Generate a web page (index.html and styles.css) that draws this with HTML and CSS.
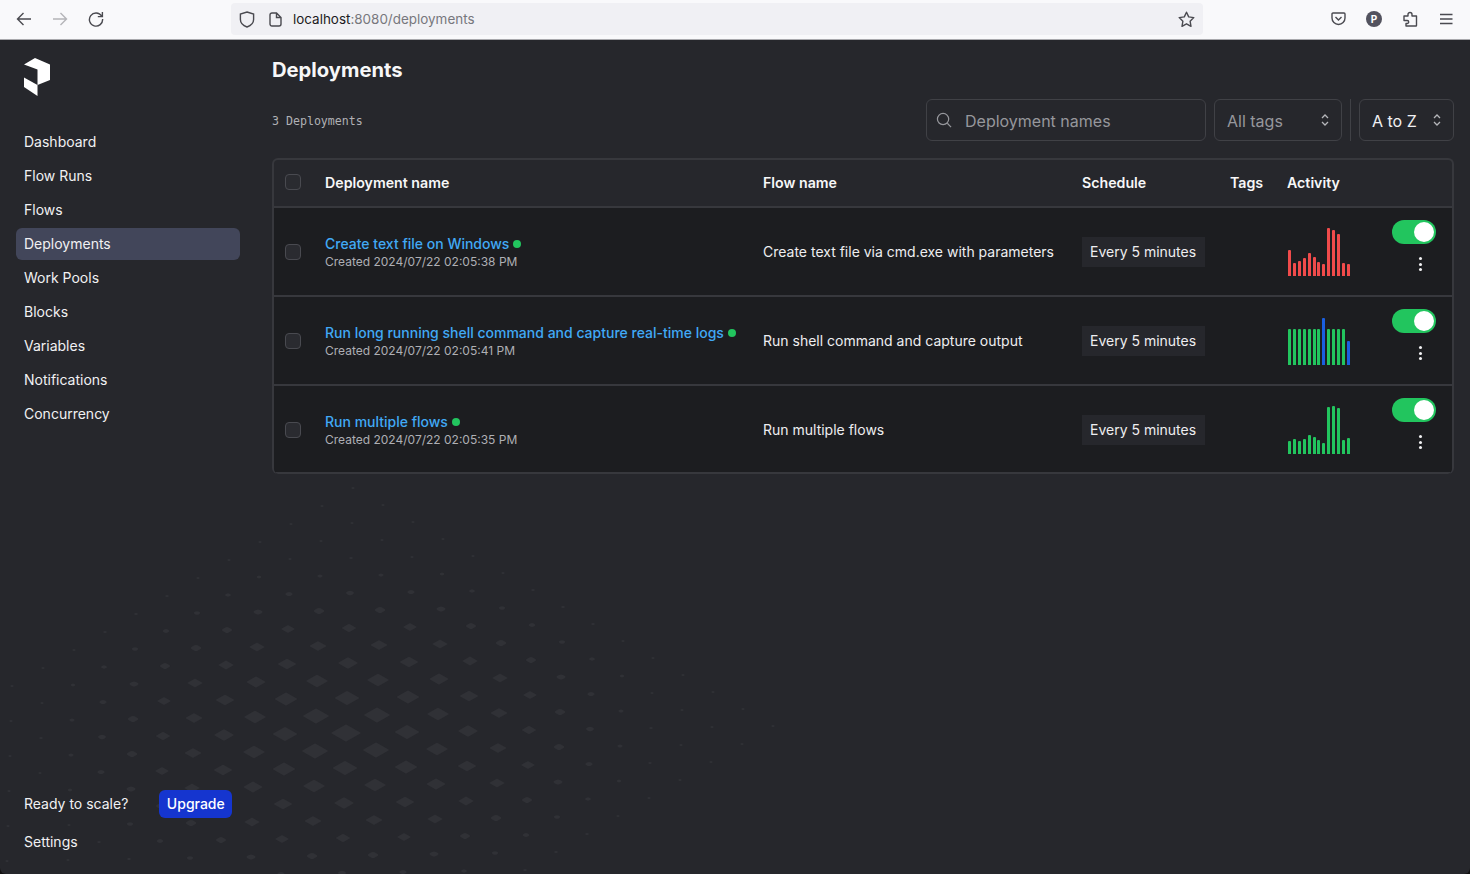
FILE: index.html
```html
<!DOCTYPE html>
<html lang="en">
<head>
    <meta charset="UTF-8">
    <meta name="viewport" content="width=device-width, initial-scale=1.0">
    <title>Deployments</title>
    <link rel="stylesheet" href="styles.css">
</head>
<body>
    <div class="toolbar">
        <div class="tool-group">
            <span class="tool"><svg width="16" height="16" viewBox="0 0 16 16" fill="none" stroke="#4a4a50" stroke-width="1.4"><path d="M15 8H1.5M7.5 2L1.5 8l6 6"/></svg></span>
            <span class="tool"><svg width="16" height="16" viewBox="0 0 16 16" fill="none" stroke="#b4b4b8" stroke-width="1.4"><path d="M1 8h13.5M8.5 2l6 6-6 6"/></svg></span>
            <span class="tool"><svg width="16" height="16" viewBox="0 0 16 16" fill="none" stroke="#4a4a50" stroke-width="1.4"><path d="M13.6 5A6.6 6.6 0 1 0 14.6 8M14.4 1v4.6H9.8"/></svg></span>
        </div>
        <div class="url-bar">
            <svg width="16" height="17" viewBox="0 0 16 17" fill="none" stroke="#4a4a50" stroke-width="1.4"><path d="M8 1l6.6 2v5.4c0 3.6-3 6.2-6.6 7.6-3.6-1.4-6.6-4-6.6-7.6V3z"/></svg>
            <svg class="page-icon" width="13" height="15" viewBox="0 0 13 15" fill="none" stroke="#4a4a50" stroke-width="1.4"><path d="M1 3a2 2 0 0 1 2-2h4.5L12 5.5V12a2 2 0 0 1-2 2H3a2 2 0 0 1-2-2zM7.5 1v4.5H12"/></svg>
            <span class="url-text">localhost<span class="url-dim">:8080/deployments</span></span>
            <svg class="star" width="17" height="17" viewBox="0 0 17 17" fill="none" stroke="#4a4a50" stroke-width="1.4" stroke-linejoin="round"><path d="M8.5 1.2l2.2 4.7 5.1.7-3.7 3.6.9 5.1-4.5-2.5L4 15.3l.9-5.1L1.200 6.600l5.100-.7z"/></svg>
        </div>
        <div class="tool-group right">
            <span class="tool"><svg width="15" height="14" viewBox="0 0 15 14" fill="none" stroke="#4a4a50" stroke-width="1.4"><path d="M2 1h11a1 1 0 0 1 1 1v4a6.500 6.500 0 0 1-13 0V2a1 1 0 0 1 1-1zM4.500 5l3 3 3-3"/></svg></span>
            <span class="tool"><span class="avatar">P</span></span>
            <span class="tool"><svg width="15" height="16" viewBox="0 0 15 16" fill="none" stroke="#4a4a50" stroke-width="1.4" stroke-linejoin="round"><path d="M1 5h4V3.500a2 2 0 0 1 4 0V5h4.500v9.500a.5.5 0 0 1-.5.5H3V12.500h1.200a1.500 1.500 0 0 0 0-3H1z"/></svg></span>
            <span class="tool"><svg width="14" height="12" viewBox="0 0 14 12" fill="none" stroke="#4a4a50" stroke-width="1.4"><path d="M1 1.500h12.500M1 6h12.500M1 10.500h12.500"/></svg></span>
        </div>
    </div>

    <div class="shell">
        <svg id="backdrop" class="backdrop" width="1470" height="834"></svg>

        <aside class="sidebar">
            <svg class="logo" width="26" height="38" viewBox="0 0 26 38" fill="#fff"><path d="M0 6.500L11 0l15 6.500v15.500l-12.500 5V11.500z"/><path d="M0 19.500l13.500 7.500v11L0 29z"/></svg>
            <nav class="nav">
                <a class="nav-item">Dashboard</a>
                <a class="nav-item">Flow Runs</a>
                <a class="nav-item">Flows</a>
                <a class="nav-item active">Deployments</a>
                <a class="nav-item">Work Pools</a>
                <a class="nav-item">Blocks</a>
                <a class="nav-item">Variables</a>
                <a class="nav-item">Notifications</a>
                <a class="nav-item">Concurrency</a>
            </nav>
            <div class="sidebar-bottom">
                <div class="upgrade-row">
                    <span class="upgrade-label">Ready to scale?</span>
                    <button class="upgrade" type="button">Upgrade</button>
                </div>
                <a class="nav-item">Settings</a>
            </div>
        </aside>

        <main class="main">
            <h1 class="title">Deployments</h1>
            <div class="filters">
                <span class="count">3 Deployments</span>
                <div class="control search">
                    <svg width="16" height="16" viewBox="0 0 17 17" fill="none" stroke="#96979c" stroke-width="1.3"><circle cx="7.500" cy="7.500" r="6"/><path d="M12 12l4 4"/></svg>
                    <span>Deployment names</span>
                </div>
                <div class="control tags">
                    <span>All tags</span>
                    <svg class="updown" width="8" height="12" viewBox="0 0 8 12" fill="none" stroke="#b5b6ba" stroke-width="1.300"><path d="M1 4l3-3 3 3M1 8l3 3 3-3"/></svg>
                </div>
                <span class="divider"></span>
                <div class="control sort">
                    <span>A to Z</span>
                    <svg class="updown" width="8" height="12" viewBox="0 0 8 12" fill="none" stroke="#b5b6ba" stroke-width="1.300"><path d="M1 4l3-3 3 3M1 8l3 3 3-3"/></svg>
                </div>
            </div>

            <div class="table-wrap">
                <table class="table">
                    <colgroup>
                        <col class="col-check"><col class="col-name"><col class="col-flow"><col class="col-schedule"><col class="col-tags"><col class="col-activity"><col>
                    </colgroup>
                    <thead>
                        <tr>
                            <th><span class="checkbox"></span></th>
                            <th>Deployment name</th>
                            <th>Flow name</th>
                            <th>Schedule</th>
                            <th>Tags</th>
                            <th>Activity</th>
                            <th></th>
                        </tr>
                    </thead>
                    <tbody>
                        <tr>
                            <td><span class="checkbox"></span></td>
                            <td>
                                <div class="name-line"><a class="name-link">Create text file on Windows</a><span class="status-dot"></span></div>
                                <div class="created">Created 2024/07/22 02:05:38 PM</div>
                            </td>
                            <td>Create text file via cmd.exe with parameters</td>
                            <td><span class="chip">Every 5 minutes</span></td>
                            <td></td>
                            <td>
                                <div class="bars red">
                                    <i style="height:26px"></i><i style="height:13px"></i><i style="height:15px"></i><i style="height:18px"></i><i style="height:23px"></i><i style="height:19px"></i><i style="height:14px"></i><i style="height:12px"></i><i style="height:48px"></i><i style="height:46px"></i><i style="height:42px"></i><i style="height:13px"></i><i style="height:12px"></i>
                                </div>
                            </td>
                            <td class="actions">
                                <span class="toggle"></span>
                                <span class="more"><b></b><b></b><b></b></span>
                            </td>
                        </tr>
                        <tr>
                            <td><span class="checkbox"></span></td>
                            <td>
                                <div class="name-line"><a class="name-link">Run long running shell command and capture real-time logs</a><span class="status-dot"></span></div>
                                <div class="created">Created 2024/07/22 02:05:41 PM</div>
                            </td>
                            <td>Run shell command and capture output</td>
                            <td><span class="chip">Every 5 minutes</span></td>
                            <td></td>
                            <td>
                                <div class="bars green">
                                    <i style="height:36px"></i><i style="height:36px"></i><i style="height:36px"></i><i style="height:36px"></i><i style="height:36px"></i><i style="height:36px"></i><i style="height:36px"></i><i class="blue" style="height:47px"></i><i style="height:36px"></i><i style="height:36px"></i><i style="height:36px"></i><i style="height:36px"></i><i class="blue" style="height:24px"></i>
                                </div>
                            </td>
                            <td class="actions">
                                <span class="toggle"></span>
                                <span class="more"><b></b><b></b><b></b></span>
                            </td>
                        </tr>
                        <tr>
                            <td><span class="checkbox"></span></td>
                            <td>
                                <div class="name-line"><a class="name-link">Run multiple flows</a><span class="status-dot"></span></div>
                                <div class="created">Created 2024/07/22 02:05:35 PM</div>
                            </td>
                            <td>Run multiple flows</td>
                            <td><span class="chip">Every 5 minutes</span></td>
                            <td></td>
                            <td>
                                <div class="bars green">
                                    <i style="height:13px"></i><i style="height:15px"></i><i style="height:13px"></i><i style="height:15px"></i><i style="height:19px"></i><i style="height:17px"></i><i style="height:14px"></i><i style="height:11px"></i><i style="height:47px"></i><i style="height:48px"></i><i style="height:46px"></i><i style="height:14px"></i><i style="height:16px"></i>
                                </div>
                            </td>
                            <td class="actions">
                                <span class="toggle"></span>
                                <span class="more"><b></b><b></b><b></b></span>
                            </td>
                        </tr>
                    </tbody>
                </table>
            </div>
        </main>
    </div>

    <script src="script.js"></script>
</body>
</html>
```

FILE: styles.css
```css
* {
    box-sizing: border-box;
}
html, body {
    height: 100%;
}
body {
    margin: 0;
    display: flex;
    flex-direction: column;
    overflow: hidden;
    font-family: Inter, "Noto Sans", sans-serif;
    font-size: 14px;
    color: #eeeef0;
    background-color: #111;
}
.toolbar {
    flex: none;
    height: 40px;
    padding: 0 6px 1px;
    display: flex;
    align-items: center;
    background-color: #f9f9fb;
    border-bottom: 1px solid #a9a9ad;
}
.tool-group {
    display: flex;
}
.tool-group.right {
    margin-left: auto;
}
.tool {
    width: 36px;
    height: 32px;
    display: flex;
    align-items: center;
    justify-content: center;
}
.url-bar {
    width: 972px;
    height: 32px;
    margin-left: 117px;
    padding: 0 8px;
    display: flex;
    align-items: center;
    background-color: #f0f0f4;
    border-radius: 4px;
}
.page-icon {
    margin-left: 14px;
}
.url-text {
    margin-left: 11px;
    font-size: 13.44px;
    color: #1c1b22;
}
.url-dim {
    color: #77777d;
}
.star {
    margin-left: auto;
}
.avatar {
    width: 16px;
    height: 16px;
    border-radius: 50%;
    background-color: #52525e;
    color: #fff;
    font-size: 10px;
    font-weight: 700;
    line-height: 16px;
    text-align: center;
}
.shell {
    flex: 1;
    position: relative;
    display: flex;
    min-height: 0;
    background-color: #26272c;
    border-radius: 0 0 6px 6px;
    overflow: hidden;
}
.backdrop {
    position: absolute;
    left: 0;
    top: 0;
}
.sidebar {
    position: relative;
    flex: none;
    width: 256px;
    padding: 18px 16px 16px;
    display: flex;
    flex-direction: column;
}
.logo {
    margin-left: 8px;
}
.nav {
    margin-top: 30px;
    display: flex;
    flex-direction: column;
    gap: 2px;
}
.nav-item {
    height: 32px;
    padding: 0 8px 2px;
    display: flex;
    align-items: center;
    border-radius: 6px;
    color: #f1f1f3;
}
.nav-item.active {
    background-color: #42465a;
}
.sidebar-bottom {
    margin-top: auto;
    display: flex;
    flex-direction: column;
    gap: 8px;
}
.upgrade-row {
    padding-left: 8px;
    display: flex;
    align-items: center;
    gap: 31px;
    color: #f1f1f3;
}
.upgrade-label {
    padding-bottom: 2px;
}
.upgrade {
    width: 73px;
    height: 28px;
    padding: 0 0 2px;
    border: none;
    border-radius: 6px;
    background-color: #1535cf;
    color: #fff;
    font-family: inherit;
    font-size: 14px;
    font-weight: 500;
}
.main {
    position: relative;
    flex: 1;
    min-width: 0;
    padding: 16px 16px 0;
}
.title {
    margin: 0;
    font-size: 20.2px;
    font-weight: 700;
    line-height: 28px;
    color: #f7f7f8;
}
.filters {
    margin-top: 15px;
    display: flex;
    align-items: center;
    gap: 8px;
}
.count {
    margin-right: auto;
    padding-top: 2px;
    font-family: "DejaVu Sans Mono", monospace;
    font-size: 11.6px;
    color: #b0b1b5;
}
.control {
    height: 42px;
    padding: 0 12px;
    display: flex;
    align-items: center;
    border: 1px solid #404146;
    border-radius: 6px;
    font-size: 16px;
    color: #96979c;
}
.control span {
    padding-top: 2px;
}
.search {
    width: 280px;
    gap: 13px;
    padding-left: 9px;
}
.tags {
    width: 128px;
    justify-content: space-between;
}
.sort {
    width: 95px;
    justify-content: space-between;
    color: #f0f0f2;
}
.divider {
    width: 1px;
    height: 42px;
    background-color: #404146;
}
.table-wrap {
    margin-top: 17px;
    border: 2px solid #37383d;
    border-bottom: none;
    border-radius: 6px;
    overflow: hidden;
}
.table {
    width: 100%;
    table-layout: fixed;
    border-collapse: separate;
    border-spacing: 0;
}
.col-check {
    width: 51px;
}
.col-name {
    width: 438px;
}
.col-flow {
    width: 319px;
}
.col-schedule {
    width: 148px;
}
.col-tags {
    width: 57px;
}
.col-activity {
    width: 105px;
}
th {
    height: 48px;
    padding: 0 0 2px;
    text-align: left;
    font-size: 14.2px;
    font-weight: 600;
    color: #f7f7f8;
    border-bottom: 2px solid #37383d;
}
td {
    height: 89px;
    padding: 0;
    background-color: #1c1d20;
    border-bottom: 2px solid #37383d;
}
tr:last-child td {
    height: 88px;
}
tr:last-child td:not(.actions) {
    padding-top: 1px;
}
th:first-child, td:first-child {
    padding-left: 11px;
}
.checkbox {
    display: block;
    width: 16px;
    height: 16px;
    border: 1px solid #494a50;
    border-radius: 4px;
    background-color: #2a2b30;
}
.name-line {
    display: flex;
    align-items: center;
    gap: 4px;
    height: 18px;
}
.name-link {
    color: #41a9f5;
    font-weight: 500;
    white-space: nowrap;
}
.status-dot {
    width: 8px;
    height: 8px;
    border-radius: 50%;
    background-color: #22c55e;
}
.created {
    margin-top: 1px;
    font-size: 12px;
    color: #aeafb4;
}
.chip {
    display: inline-block;
    padding: 0 9px 0 8px;
    height: 30px;
    line-height: 30px;
    background-color: #26272c;
    white-space: nowrap;
}
.bars {
    width: 62px;
    height: 48px;
    margin-left: 1px;
    display: flex;
    align-items: flex-end;
    justify-content: space-between;
}
.bars i {
    width: 3px;
    border-radius: 1px 1px 0 0;
}
.bars.red i {
    background-color: #f04b4b;
}
.bars.green i {
    background-color: #22c55e;
}
.bars.green i.blue {
    background-color: #1a5fe0;
}
td.actions {
    vertical-align: top;
    padding: 12px 16px 0 0;
}
.toggle {
    position: relative;
    display: block;
    margin-left: auto;
    width: 44px;
    height: 24px;
    border-radius: 12px;
    background-color: #22c55e;
}
.toggle::after {
    content: "";
    position: absolute;
    right: 2px;
    top: 2px;
    width: 20px;
    height: 20px;
    border-radius: 50%;
    background-color: #fff;
}
.more {
    margin: 13px 8px 0 auto;
    width: 16px;
    height: 14px;
    display: flex;
    flex-direction: column;
    align-items: center;
    justify-content: space-between;
}
.more b {
    width: 3px;
    height: 3px;
    border-radius: 50%;
    background-color: #f2f2f4;
}
```

FILE: script.js
```js
// dotted backdrop: an isometric lattice whose marks shrink away from the centre
const svg = document.getElementById('backdrop');
const centerX = 346;
const centerY = 693;

for (let i = -10; i <= 7; i++) {
    for (let j = -7; j <= 7; j++) {
        const x = centerX + 31 * i + 30 * j;
        const y = centerY - 18 * i + 17 * j;

        const dist = Math.hypot(i, j);
        const width = Math.max(4.6, 30 * (1 - dist / 8.5));
        const side = width / 1.414;
        const round = width < 16 ? side * Math.min(0.5, (16 - width) / 14) : 1;

        const mark = document.createElementNS('http://www.w3.org/2000/svg', 'rect');
        mark.setAttribute('x', -side / 2);
        mark.setAttribute('y', -side / 2);
        mark.setAttribute('width', side);
        mark.setAttribute('height', side);
        mark.setAttribute('rx', round);
        mark.setAttribute('fill', '#303136');
        mark.setAttribute('transform', `translate(${x} ${y}) scale(1 0.58) rotate(45)`);
        svg.appendChild(mark);
    }
}
```
